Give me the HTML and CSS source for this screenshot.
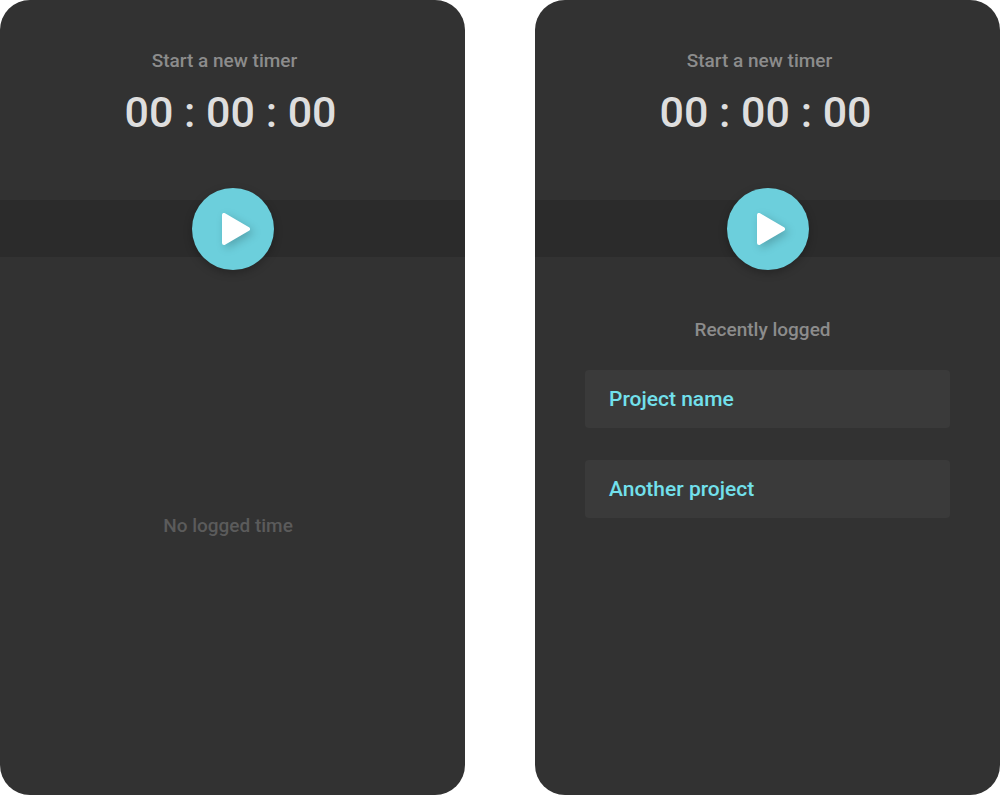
FILE: index.html
```html
<!DOCTYPE html>
<html lang="en">
<head>
<meta charset="utf-8">
<title>Timer</title>
<link rel="stylesheet" href="styles.css">
</head>
<body>
<main class="screens">
  <section class="screen">
    <header class="timer">
      <h1 class="label timer-title">Start a new timer</h1>
      <time class="clock">00 : 00 : 00</time>
    </header>
    <div class="band">
      <button class="play" type="button" aria-label="Start timer">
        <svg class="play-icon" viewBox="0 0 30 34" aria-hidden="true"><path d="M3 3v28L27 17z"/></svg>
      </button>
    </div>
    <div class="empty"><p class="empty-text">No logged time</p></div>
  </section>
  <section class="screen">
    <header class="timer">
      <h1 class="label timer-title">Start a new timer</h1>
      <time class="clock">00 : 00 : 00</time>
    </header>
    <div class="band">
      <button class="play" type="button" aria-label="Start timer">
        <svg class="play-icon" viewBox="0 0 30 34" aria-hidden="true"><path d="M3 3v28L27 17z"/></svg>
      </button>
    </div>
    <div class="recent">
      <h2 class="label recent-title">Recently logged</h2>
      <ul class="projects">
        <li><a class="project" href="#project">Project name</a></li>
        <li><a class="project" href="#another">Another project</a></li>
      </ul>
    </div>
  </section>
</main>
</body>
</html>
```
FILE: styles.css
```css
* { box-sizing: border-box; }
body {
  margin: 0;
  background: #fff;
  font-family: Roboto, "Liberation Sans", sans-serif;
  font-weight: 500;
}
.screens {
  display: grid;
  grid-template-columns: 1fr 1fr;
  gap: 70px;
  min-height: 100vh;
}
.screen {
  display: flex;
  flex-direction: column;
  background: #323232;
  border-radius: 30px;
}
.timer {
  display: flex;
  flex-direction: column;
  align-items: center;
  gap: 16px;
  padding: 50px 4px 64px 0;
}
.label {
  margin: 0;
  color: #8c8c8c;
  font-size: 19px;
  font-weight: 500;
  line-height: 22px;
}
.timer-title { padding-right: 12px; }
.clock {
  color: #dedede;
  font-size: 43px;
  line-height: 48px;
}
.band {
  display: flex;
  justify-content: center;
  align-items: center;
  height: 57px;
  background: #2b2b2b;
}
.play {
  display: flex;
  flex: none;
  justify-content: center;
  align-items: center;
  width: 82px;
  height: 82px;
  padding: 0 0 0 6px;
  border: 0;
  border-radius: 50%;
  background: #6ccfdc;
  box-shadow: 0 3px 8px rgba(0, 0, 0, 0.25);
  cursor: pointer;
}
.play-icon {
  width: 30px;
  height: 34px;
  overflow: visible;
  fill: #fff;
  stroke: #fff;
  stroke-width: 4px;
  stroke-linejoin: round;
  filter: drop-shadow(3px 3px 4px rgba(0, 0, 0, 0.2));
}
.empty {
  display: flex;
  flex: 1;
  justify-content: center;
  align-items: center;
  padding-right: 9px;
}
.empty-text {
  margin: 0;
  color: #5b5b5b;
  font-size: 19px;
  line-height: 22px;
}
.recent { padding: 62px 50px; }
.recent-title {
  padding-right: 10px;
  text-align: center;
}
.projects {
  display: grid;
  gap: 32px;
  margin: 29px 0 0;
  padding: 0;
  list-style: none;
}
.project {
  display: block;
  padding: 17px 24px;
  border-radius: 4px;
  background: #3a3a3a;
  color: #72e0ec;
  font-size: 21px;
  line-height: 24px;
  text-decoration: none;
}
```
